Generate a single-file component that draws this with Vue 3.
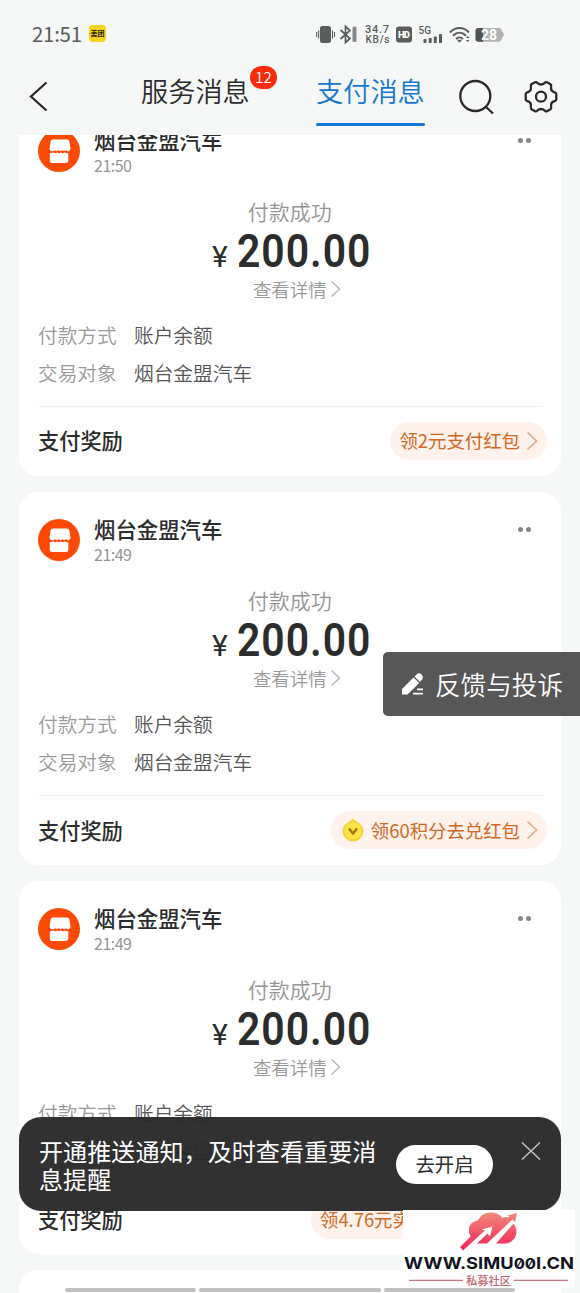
<script setup>
const messages = [
  { id: 1, time: '21:50', reward: '领2元支付红包', kind: 'plain' },
  { id: 2, time: '21:49', reward: '领60积分去兑红包', kind: 'points' },
  { id: 3, time: '21:49', reward: '领4.76元实', kind: 'wide' }
]
</script>

<template>
  <div class="screen">
    <header class="top">
      <div class="status">
        <span class="clock">21:51</span>
        <span class="app-chip">美团</span>
        <svg class="status-icons" width="192" height="26" viewBox="0 0 192 26">
          <g fill="#5a5c5b">
            <rect x="5" y="5" width="11" height="17" rx="2.5" />
            <path d="M1.700 11v5M3.700 9.500v8M17.500 9.500v8M19.500 11v5" stroke="#5a5c5b" stroke-width="1.1" />
            <path d="M25.500 9l9.500 8.500-4.500 4v-16l4.500 4-9.500 8.500" fill="none" stroke="#5a5c5b" stroke-width="1.7" />
            <rect x="37.500" y="5.500" width="4" height="15.500" rx="1.500" fill="#868887" />
            <text x="50" y="12" class="tiny" textLength="24">34.7</text>
            <text x="50.500" y="22.300" class="tiny unit" textLength="24">KB/s</text>
            <rect x="81" y="5.500" width="16" height="16" rx="3" />
            <text x="83" y="17.300" class="hd" textLength="12">HD</text>
            <text x="103.500" y="13" class="tiny five" textLength="12.500">5G</text>
            <rect x="108.500" y="18" width="3" height="4" rx=".7" />
            <rect x="113.700" y="17" width="3" height="5" rx=".7" />
            <rect x="118.800" y="15.500" width="3" height="6.500" rx=".7" />
            <rect x="124" y="13" width="3" height="9" rx=".7" />
            <path d="M135 11.500c5.500-6 13.500-6 19 0M138 14.700c4-4 9-4 13 0M141 18c2-2 5-2 7 0" fill="none" stroke="#5a5c5b" stroke-width="2" />
            <path d="M142 18.800h5l-2.500 3z" />
            <path d="M151 17l1.700-2 1.700 2zM151 19l1.700 2 1.700-2z" />
          </g>
          <path d="M163.500 7h20c3 0 3 2 3.500 3.500 1 1 1.700 1.500 1.700 3.200s-.7 2-1.700 3.300c-.5 2-1 3.800-3.500 3.800h-20c-2 0-3-1-3-3v-7.800c0-2 1-3 3-3z" fill="#b1b3b2" />
          <path d="M163.500 7h4.500v13.800h-4.500c-2 0-3-1-3-3v-7.800c0-2 1-3 3-3z" fill="#515352" />
          <text x="166" y="18.800" class="battery" textLength="16">28</text>
        </svg>
      </div>
      <nav class="nav">
        <svg class="back" width="20" height="32" viewBox="0 0 20 32"><path d="M18.500 1.500L3 15.500 18.500 29.500" /></svg>
        <div class="tab first">服务消息<span class="badge">12</span></div>
        <div class="tab active">支付消息</div>
        <svg class="search" width="37" height="36" viewBox="0 0 37 36">
          <circle cx="17.300" cy="17" r="15" /><path d="M27.500 27.500l7.500 7" />
        </svg>
        <svg class="gear" width="34" height="34" viewBox="0 0 34 34">
          <path d="M11 2.300Q12.300 1.700 13.200 2.800 17 6.300 20.800 2.800 21.700 1.700 23 2.300L26.500 4.300Q27.500 5 27.100 6.300 26.200 11.500 31 12.500 32.300 13 32.300 14.200V19.200Q32.300 20.500 31 21 26.200 22 27.100 27.200 27.500 28.500 26.500 29.200L23 31.200Q21.700 31.800 20.800 30.700 17 27.200 13.200 30.700 12.300 31.800 11 31.200L7.500 29.200Q6.500 28.500 6.900 27.200 7.800 22 3 21 1.700 20.500 1.700 19.200V14.200Q1.700 13 3 12.500 7.800 11.500 6.900 6.300 6.500 5 7.500 4.300Z" />
          <circle cx="17" cy="16.700" r="5" />
        </svg>
      </nav>
    </header>

    <main class="feed">
      <article v-for="m in messages" :key="m.id" class="card">
        <div class="head">
          <svg class="avatar" width="42" height="42" viewBox="0 0 42 42">
            <circle cx="21" cy="21" r="21" fill="#fc4a05" />
            <path d="M13 9.500h16q2 0 2.400 2l1.100 7q.3 2.200-1.800 2.700-1.500.2-2.700-.9-2 1.600-3.700 0-1.700 1.600-3.500 0-2 1.600-3.700 0-1.700 1.300-3.200.9-2.500-.4-2.400-2.700l1.100-7q.4-2 2.400-2z" fill="#fff" />
            <path d="M11.800 23.200q2 .2 3.500-.9 2 1.700 4 0 1.800 1.700 3.500 0 2 1.700 4 0 1.500 1 3.500.9v7.300q0 2.500-2.500 2.500h-13.500q-2.500 0-2.500-2.500z" fill="#fff" />
          </svg>
          <div class="who">
            <div class="name">烟台金盟汽车</div>
            <div class="time">{{ m.time }}</div>
          </div>
          <div class="more"><i></i><i></i></div>
        </div>
        <div class="result">付款成功</div>
        <div class="amount"><span class="yen">¥</span><span class="num">200.00</span></div>
        <div class="detail">查看详情<svg width="11" height="18" viewBox="0 0 11 18"><path d="M1.500 1.500L9.500 9l-8 7.500" /></svg></div>
        <dl class="facts">
          <div><dt>付款方式</dt><dd>账户余额</dd></div>
          <div><dt>交易对象</dt><dd>烟台金盟汽车</dd></div>
        </dl>
        <hr class="rule">
        <div class="foot">
          <b>支付奖励</b>
          <div class="pill" :class="m.kind">
            <svg v-if="m.kind === 'points'" class="coin" width="24" height="26" viewBox="0 0 24 26">
              <path d="M12 1.500c1 1 2.200 2 4 3.200 3.700 2.300 6.500 4.800 6.500 9.300a10.500 10.500 0 0 1-21 0c0-4.500 2.800-7 6.500-9.300 1.800-1.200 3-2.200 4-3.200z" fill="#f3d53a" />
              <circle cx="12" cy="14" r="8.300" fill="#fce34a" />
              <path d="M8 11.500l4 5 4-5" fill="none" stroke="#a07a08" stroke-width="2.500" />
            </svg>
            <span>{{ m.reward }}</span>
            <svg class="arrow" width="12" height="20" viewBox="0 0 12 20"><path d="M1.500 1.500L10.500 10l-9 8.500" /></svg>
          </div>
        </div>
      </article>
      <article class="card"></article>
    </main>

    <div class="feedback">
      <svg width="24" height="24" viewBox="0 0 24 24">
        <path d="M1 22.500v-5.500L12.500 5.500l5.700 5.500L6.500 22.500zM13.500 4.500l2.300-2.300q2.500-1.800 4.800.3 2.300 2.300.5 4.900L19 10z" />
        <path d="M16 17.300H22M12 21.700H22" stroke="#fff" stroke-width="1.700" />
      </svg>
      <span>反馈与投诉</span>
    </div>

    <div class="banner">
      <p>开通推送通知，及时查看重要消息提醒</p>
      <button>去开启</button>
      <svg width="20" height="20" viewBox="0 0 20 20"><path d="M1 1.500l18 17M19 1.500l-18 17" /></svg>
    </div>

    <div class="home-bars"><i></i><i class="mid"></i><i></i></div>

    <div class="mark">
      <svg width="172" height="78" viewBox="0 0 172 78">
        <defs>
          <linearGradient id="cloud" gradientUnits="userSpaceOnUse" x1="85" y1="2" x2="85" y2="40">
            <stop offset="0" stop-color="#f48a7c" /><stop offset="1" stop-color="#ef2556" />
          </linearGradient>
        </defs>
        <path d="M57 37L67.500 26.500Q64 20 67.500 14.500 70 11 75 10.500 78 3 87 2.500 95 2 99.500 8 102 6.500 105 7.500L107 6 103.500 5.500 114 3 112 12.500 110.500 10 109 12Q114 17 113.500 23 112 32 103 33.500H73L60 40.500Z" fill="url(#cloud)" />
        <path d="M60 40.500L82 20.500 78.500 19.500 89.500 16.500 87 26.500 84.500 23.500 74 33.500 67 38ZM84 33.500L109.500 9.500 111 13 93 33.500 91 36H83Z" fill="#fff" />
        <text x="1" y="59.200" class="url" textLength="170" lengthAdjust="spacingAndGlyphs">WWW.SIMU<tspan class="zero">00</tspan>I.CN</text>
        <path d="M6 70.300h54M111 70.300h54" stroke="#c87884" stroke-width="1.200" />
        <text x="63" y="74.500" class="club" textLength="45">私募社区</text>
      </svg>
    </div>
  </div>
</template>

<style>
body { margin: 0; }
</style>

<style scoped>
.screen {
  position: relative;
  width: 580px;
  height: 1293px;
  overflow: hidden;
  background: #f5f7f6;
  color: #2c2c2c;
  font-family: "Noto Sans CJK SC", "Noto Sans", sans-serif;
  white-space: nowrap;
  display: flex;
  flex-direction: column;
}
.top { height: 135px; flex: none; }
.status { height: 66px; box-sizing: border-box; padding: 2px 0 0 32px; display: flex; align-items: center; }
.clock { font-size: 20.500px; width: 57px; color: #5a5c5b; letter-spacing: -.3px; line-height: 30px; margin-top: -3px; }
.app-chip { width: 17px; height: 17px; border-radius: 4px; background: #f7d51c; font-size: 7px; font-weight: 700; line-height: 16px; text-align: center; color: #282000; margin-top: -1px; }
.status-icons { margin-left: 209px; }
.tiny { font: 500 11px Roboto, sans-serif; fill: #5a5c5b; }
.unit { font-size: 10px; font-weight: 500; }
.five { font-size: 10px; }
.hd { font: 900 9.500px Roboto, sans-serif; fill: #fff; }
.battery { font: 700 14px Roboto, sans-serif; fill: #fff; }
.nav { height: 60px; display: flex; align-items: flex-start; padding-left: 28px; }
.nav svg { fill: none; stroke: #2a2a2a; stroke-width: 2.300; flex: none; }
.back { margin-top: 15px; }
.tab { position: relative; font-size: 27.200px; line-height: 48.500px; height: 60px; box-sizing: border-box; font-weight: 350; }
.first { margin-left: 93px; width: 108px; }
.active { margin-left: 67px; width: 109px; color: #1677d2; }
.active::after { content: ""; position: absolute; left: 0; bottom: 0; width: 109px; height: 3.500px; border-radius: 2px; background: #1677d2; }
.badge { position: absolute; left: 109px; top: 0; width: 27px; height: 23px; border-radius: 12px; background: #f82c0a; color: #fff; font-size: 15px; line-height: 22px; text-align: center; }
.search { margin: 13px 0 0 33px; }
.gear { margin: 14px 0 0 29px; }
.feed { flex: 1; overflow: hidden; min-height: 0; }
.card { box-sizing: border-box; width: 541.500px; height: 373.300px; margin: 0 0 16px 19px; padding: 27.700px 19px 0; background: #fff; border-radius: 20px; }
.card:first-child { margin-top: -32.800px; }
.head { height: 42px; display: flex; }
.who { margin-left: 14px; flex: 1; }
.name { font-size: 21.400px; font-weight: 500; line-height: 30px; margin-top: -5px; }
.time { font-size: 16px; line-height: 20px; color: #949494; letter-spacing: -.5px; }
.more { display: flex; gap: 3px; padding: 8px 10.500px 0 0; }
.more i { width: 5px; height: 5px; border-radius: 50%; background: #858585; }
.result { margin-top: 25px; height: 28px; line-height: 28px; text-align: center; font-size: 21px; color: #949494; font-weight: 350; }
.amount { height: 50px; display: flex; align-items: baseline; line-height: 53px; padding-left: 174px; font-family: Roboto, sans-serif; }
.yen { font-size: 30px; width: 25px; }
.num { font-size: 46.500px; font-weight: 600; letter-spacing: 1.100px; transform: scaleX(.88); transform-origin: left; }
.detail { height: 28px; display: flex; align-items: center; justify-content: center; padding-left: 14px; font-size: 18.400px; font-weight: 350; color: #999; line-height: 28px; }
.detail svg { margin-left: 3px; fill: none; stroke: #bbb; stroke-width: 1.500; }
.facts { margin: 14px 0 0; font-size: 19.700px; font-weight: 350; }
.facts div { display: flex; height: 37.800px; line-height: 36.500px; }
.facts dt { width: 96px; color: #999; }
.facts dd { margin: 0; color: #555; }
.rule { margin: 13.500px 0 0; border: 0; height: 1px; background: #f1f1f1; }
.foot { padding-top: 15px; display: flex; justify-content: space-between; align-items: center; width: 508.500px; }
.foot b { font-size: 21.200px; font-weight: 500; line-height: 36px; margin-top: -1px; }
.pill { box-sizing: border-box; height: 38px; border-radius: 19px; background: #fff1ec; color: #d16823; display: flex; align-items: center; padding: 0 9px 0 9.500px; font-size: 18.400px; }
.pill span { margin-top: -1px; }
.pill.wide { width: 236px; }
.arrow { margin-left: auto; fill: none; stroke: #e5ac8a; stroke-width: 1.700; }
.plain .arrow, .points .arrow { margin-left: 5.500px; }
.coin { margin-right: 6px; }
.feedback { position: absolute; right: 0; top: 652px; width: 197px; height: 64px; box-sizing: border-box; padding-left: 18px; display: flex; align-items: center; gap: 10px; border-radius: 5px 0 0 5px; background: rgba(80, 80, 80, .96); color: #fff; font-size: 25.600px; font-weight: 350; }
.feedback span { margin-top: -2px; }
.feedback svg { fill: #fff; }
.banner { position: absolute; left: 19px; top: 1117px; width: 542px; height: 93.500px; box-sizing: border-box; padding: 18px 20px; border-radius: 22px; background: rgba(41, 41, 41, .965); display: flex; align-items: flex-start; color: #fff; }
.banner p { margin: 1.500px 0 0; width: 340px; font-size: 24.100px; line-height: 28px; white-space: normal; word-break: break-all; flex: none; }
.banner button { margin: 9.500px 0 0 17px; width: 97px; height: 39px; padding: 0 0 1px; border: 0; border-radius: 20px; background: #fff; color: #2c2c2c; font: 400 19.400px "Noto Sans CJK SC", sans-serif; flex: none; }
.banner svg { margin: 6px 0 0 28px; fill: none; stroke: #c4c4c4; stroke-width: 1.500; flex: none; }
.home-bars { position: absolute; left: 65px; top: 1287.500px; display: flex; gap: 3px; }
.home-bars i { width: 131px; height: 4px; border-radius: 2px; background: #c1c1c1; }
.home-bars .mid { width: 182px; }
.mark { position: absolute; left: 403px; top: 1210px; width: 172px; height: 78px; background: #fff; }
.url { font: 700 16.500px Inter, sans-serif; fill: #11131f; font-feature-settings: "zero"; }
.zero { font-size: 15px; }
.club { font: 500 11.300px "Noto Sans CJK SC", sans-serif; fill: #c06573; }
</style>
